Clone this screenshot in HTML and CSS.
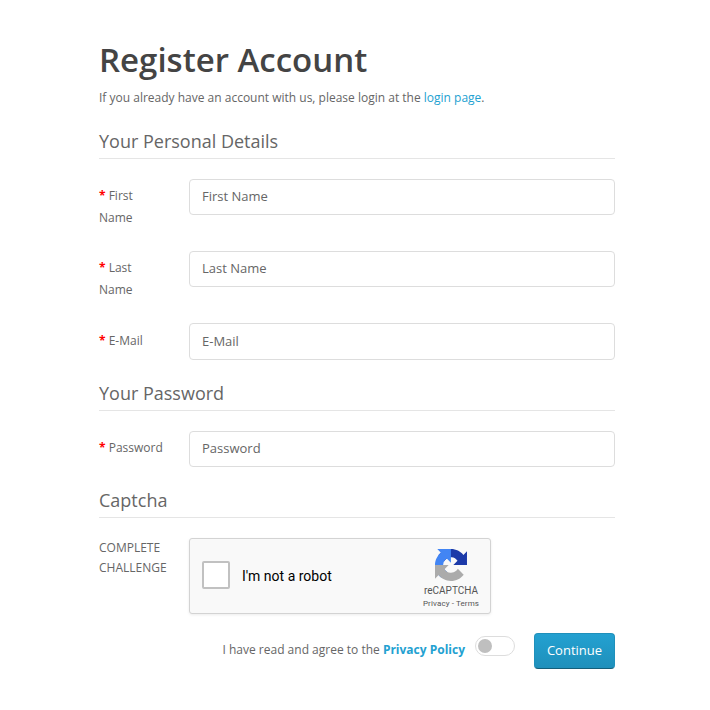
FILE: index.html
```html
<!DOCTYPE html>
<html lang="en">
<head>
    <meta charset="UTF-8">
    <meta name="viewport" content="width=device-width, initial-scale=1.0">
    <title>Register Account</title>
    <link rel="stylesheet" href="styles.css">
</head>
<body>
    <div class="container">
        <h1>Register Account</h1>
        <p class="intro">If you already have an account with us, please login at the <a href="#">login page</a>.</p>
        <form>
            <section class="personal">
                <h2>Your Personal Details</h2>
                <div class="form-group">
                    <label class="required" for="firstname">First Name</label>
                    <input type="text" id="firstname" placeholder="First Name">
                </div>
                <div class="form-group">
                    <label class="required" for="lastname">Last Name</label>
                    <input type="text" id="lastname" placeholder="Last Name">
                </div>
                <div class="form-group email">
                    <label class="required" for="email">E-Mail</label>
                    <input type="email" id="email" placeholder="E-Mail">
                </div>
            </section>

            <section class="password">
                <h2>Your Password</h2>
                <div class="form-group">
                    <label class="required" for="password">Password</label>
                    <input type="password" id="password" placeholder="Password">
                </div>
            </section>

            <section class="captcha">
                <h2>Captcha</h2>
                <div class="form-group">
                    <div class="challenge">COMPLETE CHALLENGE</div>
                    <div class="recaptcha">
                        <span class="checkbox"></span>
                        <span class="robot">I'm not a robot</span>
                        <div class="brand">
                            <svg width="32" height="32" viewBox="0 0 64 64">
                                <path fill="#1c3aa9" d="M64 31.955l-.033-1.37V4.687l-7.16 7.16C50.948 4.674 42.033.093 32.05.093c-10.389 0-19.622 4.96-25.458 12.64l11.736 11.86a15.55 15.55 0 0 1 4.754-5.334c2.05-1.6 4.952-2.906 8.968-2.906.485 0 .86.057 1.135.163 4.976.393 9.288 3.14 11.828 7.124l-8.307 8.307L64 31.953"/>
                                <path fill="#4285f4" d="M31.862.094l-1.37.033H4.594l7.16 7.16C4.58 13.147 0 22.06 0 32.046c0 10.388 4.96 19.622 12.64 25.458L24.5 45.768a15.55 15.55 0 0 1-5.334-4.754c-1.6-2.05-2.906-4.952-2.906-8.968 0-.485.057-.86.163-1.135.393-4.976 3.14-9.288 7.124-11.828l8.307 8.307L31.86.095"/>
                                <path fill="#ababab" d="M.001 32.045l.033 1.37v25.898l7.16-7.16c5.86 7.173 14.774 11.754 24.76 11.754 10.388 0 19.622-4.96 25.458-12.64l-11.736-11.86a15.55 15.55 0 0 1-4.754 5.334c-2.05 1.6-4.952 2.906-8.968 2.906-.485 0-.86-.057-1.135-.163-4.976-.393-9.288-3.14-11.828-7.124l8.307-8.307c-10.522.04-22.4.066-27.295-.005"/>
                            </svg>
                            <span class="brand-name">reCAPTCHA</span>
                            <span class="brand-links">Privacy - Terms</span>
                        </div>
                    </div>
                </div>
            </section>

            <div class="buttons">
                <span class="agree">I have read and agree to the <a href="#">Privacy Policy</a></span>
                <span class="switch"></span>
                <button type="button">Continue</button>
            </div>
        </form>
    </div>
</body>
</html>
```

FILE: styles.css
```css
* {
    box-sizing: border-box;
}

body {
    margin: 0;
    background-color: #fff;
    color: #666;
    font-family: "Open Sans", sans-serif;
    font-size: 12px;
    line-height: 22px;
}

.container {
    width: 516px;
    margin-left: 99px;
    padding-top: 36px;
}

h1 {
    margin: 0;
    color: #444;
    font-size: 33px;
    font-weight: 600;
    line-height: 48px;
}

.intro {
    margin: 3px 0 0;
}

a {
    color: #23a1d1;
    text-decoration: none;
}

h2 {
    margin: 0 0 20px;
    height: 29px;
    border-bottom: 1px solid #e5e5e5;
    font-size: 18px;
    font-weight: 400;
    line-height: 22px;
}

section {
    padding-top: 21px;
}

.password,
.captcha {
    padding-top: 22px;
}

.form-group {
    display: grid;
    grid-template-columns: 70px 426px;
    column-gap: 20px;
    align-items: start;
}

.form-group + .form-group {
    margin-top: 22px;
}

label {
    width: 64px;
    padding-top: 6px;
}

.required::before {
    content: "* ";
    color: #f00;
    font-weight: bold;
}

input {
    width: 426px;
    height: 36px;
    padding: 0 12px 2px;
    border: 1px solid #ddd;
    border-radius: 4px;
    background-color: #fff;
    font-family: inherit;
    font-size: 13px;
}

.email label {
    padding-top: 7px;
}

.email input {
    height: 37px;
    padding-bottom: 1px;
}

input::placeholder {
    color: #666;
    opacity: 1;
}

.challenge {
    line-height: 20px;
}

.recaptcha {
    display: flex;
    align-items: center;
    width: 302px;
    height: 76px;
    padding-left: 12px;
    border: 1px solid #d3d3d3;
    border-radius: 3px;
    background-color: #f9f9f9;
    box-shadow: 0 1px 3px rgba(0, 0, 0, 0.08);
    color: #000;
    font-family: Roboto, sans-serif;
}

.checkbox {
    width: 28px;
    height: 28px;
    margin-bottom: 2px;
    border: 2px solid #c1c1c1;
    border-radius: 2px;
    background-color: #fff;
}

.robot {
    margin-left: 12px;
    font-size: 14px;
}

.brand {
    display: flex;
    flex-direction: column;
    align-items: center;
    align-self: flex-start;
    width: 78px;
    margin-left: auto;
    padding-top: 10px;
    color: #555;
}

.brand-name {
    margin-top: 3px;
    font-size: 10px;
    line-height: 14px;
}

.brand-links {
    font-size: 8px;
    line-height: 12px;
    letter-spacing: 0.12px;
}

.buttons {
    display: flex;
    justify-content: flex-end;
    align-items: center;
    height: 36px;
    margin-top: 19px;
}

.agree {
    padding-bottom: 2px;
}

.agree a {
    font-weight: bold;
}

.switch {
    width: 40px;
    height: 20px;
    margin: 0 19px 10px 10px;
    padding: 2px;
    border: 1px solid #ddd;
    border-radius: 10px;
}

.switch::before {
    content: "";
    display: block;
    width: 14px;
    height: 14px;
    border-radius: 50%;
    background-color: #bfbfbf;
}

button {
    width: 81px;
    height: 36px;
    padding: 0 0 2px;
    border: 1px solid #1f90bb;
    border-bottom-color: #145e7a;
    border-radius: 4px;
    background-image: linear-gradient(#23a1d1, #1f90bb);
    color: #fff;
    font-family: inherit;
    font-size: 13px;
    cursor: pointer;
}
```
